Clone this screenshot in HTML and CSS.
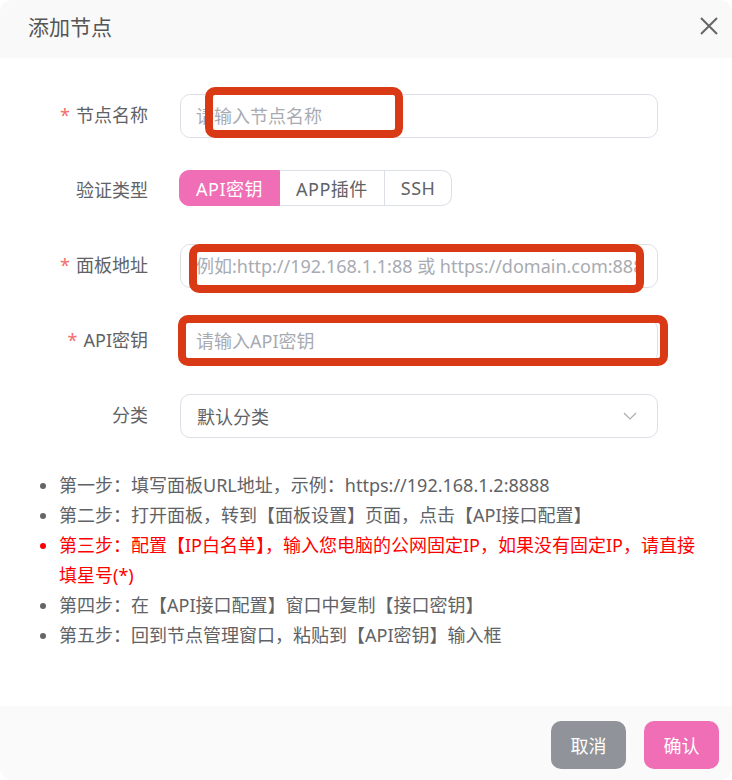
FILE: index.html
```html
<!DOCTYPE html>
<html lang="zh-CN">

<head>
    <meta charset="UTF-8">
    <meta name="viewport" content="width=device-width, initial-scale=1.0">
    <title>添加节点</title>
    <link rel="stylesheet" href="styles.css">
</head>

<body>
    <div class="dialog">
        <div class="dialog-header">
            <span class="dialog-title">添加节点</span>
            <svg class="dialog-close" width="20" height="20" viewBox="0 0 20 20">
                <path d="M2 2 L18 18 M18 2 L2 18" stroke="#666" stroke-width="2" fill="none" />
            </svg>
        </div>

        <div class="dialog-body">
            <div class="form-item">
                <label class="form-label"><i>*</i>节点名称</label>
                <input class="form-input" type="text" placeholder="请输入节点名称">
            </div>
            <div class="form-item">
                <label class="form-label">验证类型</label>
                <div class="radio-group">
                    <span class="radio-btn active">API密钥</span>
                    <span class="radio-btn">APP插件</span>
                    <span class="radio-btn">SSH</span>
                </div>
            </div>
            <div class="form-item">
                <label class="form-label"><i>*</i>面板地址</label>
                <input class="form-input" type="text" placeholder="例如:http://192.168.1.1:88 或 https://domain.com:8888">
            </div>
            <div class="form-item">
                <label class="form-label"><i>*</i>API密钥</label>
                <input class="form-input" type="text" placeholder="请输入API密钥">
            </div>
            <div class="form-item">
                <label class="form-label">分类</label>
                <div class="form-select">
                    <span>默认分类</span>
                    <svg width="14" height="8" viewBox="0 0 14 8">
                        <path d="M1 1 L7 7 L13 1" stroke="#a8abb2" stroke-width="1.2" fill="none" />
                    </svg>
                </div>
            </div>

            <ul class="steps">
                <li>第一步：填写面板URL地址，示例：https://192.168.1.2:8888</li>
                <li>第二步：打开面板，转到【面板设置】页面，点击【API接口配置】</li>
                <li class="warn">第三步：配置【IP白名单】，输入您电脑的公网固定IP，如果没有固定IP，请直接填星号(*)</li>
                <li>第四步：在【API接口配置】窗口中复制【接口密钥】</li>
                <li>第五步：回到节点管理窗口，粘贴到【API密钥】输入框</li>
            </ul>
        </div>

        <div class="dialog-footer">
            <button class="btn btn-cancel">取消</button>
            <button class="btn btn-ok">确认</button>
        </div>

        <!-- 截图上的红框标注 -->
        <div class="mark mark-name"></div>
        <div class="mark mark-url"></div>
        <div class="mark mark-key"></div>
    </div>
</body>

</html>
```

FILE: styles.css
```css
* {
    margin: 0;
    padding: 0;
    box-sizing: border-box;
}

body,
html {
    width: 100%;
    height: 100%;
    background-color: #fff;
}

body {
    font-family: "Noto Sans", "Noto Sans CJK SC", sans-serif;
    color: #606266;
}

.dialog {
    position: relative;
    display: flex;
    flex-direction: column;
    height: 780px;
    border-radius: 12px;
    overflow: hidden;
    background-color: #fff;
}

.dialog-header {
    display: flex;
    align-items: center;
    justify-content: space-between;
    height: 58px;
    padding: 0 13px 6px 28px;
    background-color: #f9f9f9;
}

.dialog-title {
    font-size: 21px;
    color: #555;
}

.dialog-body {
    flex: 1;
    padding-top: 36px;
}

.form-item {
    display: flex;
    align-items: center;
    height: 44px;
    margin-bottom: 31px;
}

.form-label {
    width: 148px;
    margin-right: 32px;
    text-align: right;
    font-size: 18px;
    color: #606266;
    padding-bottom: 4px;
}

.form-label i {
    font-style: normal;
    color: #f56c6c;
    margin-right: 6px;
}

.form-input,
.form-select {
    width: 478px;
    height: 44px;
    border: 1px solid #dcdfe6;
    border-radius: 10px;
    padding: 0 15px;
    font-family: inherit;
    font-size: 18px;
    color: #606266;
    outline: none;
    background-color: #fff;
}

.form-input::placeholder {
    color: #a8abb2;
}

.form-select {
    display: flex;
    align-items: center;
    justify-content: space-between;
    padding: 0 20px 0 16px;
}

.radio-group {
    display: flex;
    height: 36px;
    margin-top: -6px;
    margin-left: -1px;
}

.radio-btn {
    display: flex;
    align-items: center;
    padding: 0 16px;
    font-size: 18px;
    letter-spacing: 0.5px;
    color: #606266;
    border: 1px solid #dcdfe6;
    border-left: none;
}

.radio-btn:first-child {
    border-left: 1px solid #dcdfe6;
    border-radius: 10px 0 0 10px;
}

.radio-btn:last-child {
    border-radius: 0 10px 10px 0;
}

.radio-btn.active {
    color: #fff;
    background-color: #f06eb5;
    border-color: #f06eb5;
}

.steps {
    margin-top: 32px;
    padding: 0 24px 0 59px;
    font-size: 18px;
    line-height: 30px;
    color: #606266;
}

.steps li::marker {
    color: #666;
}

.steps .warn {
    color: #f00;
}

.steps .warn::marker {
    color: #f00;
}

.dialog-footer {
    display: flex;
    justify-content: flex-end;
    gap: 18px;
    height: 74px;
    padding: 15px 13px 0 0;
    background-color: #fafafa;
}

.btn {
    width: 75px;
    height: 48px;
    border: none;
    border-radius: 10px;
    font-family: inherit;
    font-size: 18px;
    color: #fff;
    cursor: pointer;
}

.btn-cancel {
    background-color: #909399;
}

.btn-ok {
    background-color: #f06eb5;
}

.mark {
    position: absolute;
    border: 8px solid #d93a15;
    border-radius: 10px;
}

.mark-name {
    left: 205px;
    top: 87px;
    width: 198px;
    height: 51px;
}

.mark-url {
    left: 189px;
    top: 244px;
    width: 455px;
    height: 49px;
}

.mark-key {
    left: 178px;
    top: 315px;
    width: 490px;
    height: 51px;
}
```
